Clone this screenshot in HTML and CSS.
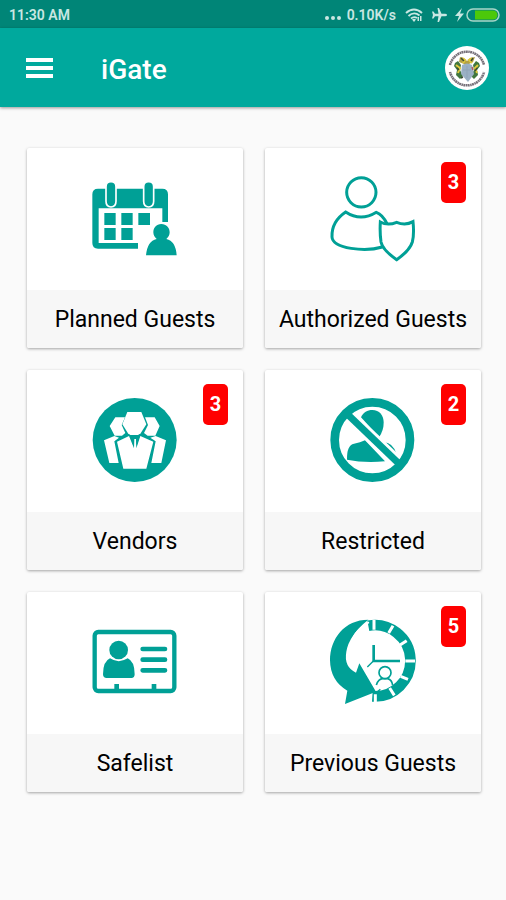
FILE: index.html
```html
<!DOCTYPE html>
<html lang="en">
<head>
    <meta charset="UTF-8">
    <meta name="viewport" content="width=device-width, initial-scale=1.0">
    <title>iGate</title>
    <link rel="stylesheet" href="styles.css">
</head>
<body>

    <!-- Status bar -->
    <div class="status-bar">
        <span>11:30 AM</span>
        <div class="status-icons">
            <svg class="dots" width="16" height="14" viewBox="0 0 16 14" aria-hidden="true">
                <circle cx="2" cy="10" r="2"/><circle cx="8" cy="10" r="2"/><circle cx="14" cy="10" r="2"/>
            </svg>
            <span class="speed">0.10K/s</span>
            <svg class="wifi" width="18" height="14" viewBox="0 0 18 14" aria-hidden="true">
                <path d="M1 5Q9-2 17 5M3.500 8Q9 3 14.500 7.500M6 10.500Q9 8 12 10" fill="none" stroke="currentColor" stroke-width="1.900"/>
                <path d="M7 11.500Q9 10 11 11.500L9 14zM12.500 9h1.500v4h-1.500zM15 8h1.500v5H15z"/>
            </svg>
            <svg class="plane" width="16" height="14" viewBox="0 0 16 14" aria-hidden="true">
                <path d="M16 7Q16 8.300 14 8.300H10.500L8 14H6.500L7.500 8.300H4L2.500 10.500H1L2 7 1 3.500H2.500L4 5.700H7.500L6.500 0H8L10.500 5.700H14Q16 5.700 16 7z"/>
            </svg>
            <svg class="bolt" width="9" height="14" viewBox="0 0 9 14" aria-hidden="true">
                <path d="M7 0 0 8H4L2 14 9 5.500H5z"/>
            </svg>
            <svg width="34" height="14" viewBox="0 0 34 14" aria-hidden="true">
                <rect x="1" y="1" width="32" height="12" rx="6" fill="none" stroke="#a9d6c9" stroke-width="1.500"/>
                <path d="M9 2.500H27a4.500 4.500 0 0 1 0 9H9z" fill="#4cc80a"/>
            </svg>
        </div>
    </div>

    <!-- App bar -->
    <header class="app-bar">
        <button class="menu-button" type="button" aria-label="Menu">
            <span></span><span></span><span></span>
        </button>
        <h1>iGate</h1>
        <button class="crest-button" type="button" aria-label="Community">
            <svg width="44" height="44" viewBox="0 0 44 44" aria-hidden="true">
                <circle cx="22" cy="22" r="22" fill="#fff"/>
                <path d="M5 19A17.500 17.500 0 0 1 39 19" fill="none" stroke="#77717a" stroke-width="2.500" stroke-dasharray="2 .5 1.500 .4"/>
                <path d="M5 26A17.500 17.500 0 0 0 39 26" fill="none" stroke="#77717a" stroke-width="2.500" stroke-dasharray="1.500 .4 2 .5"/>
                <path d="M10 17 13 15 16 19 15 24 18 30 15 33 11 29 12 24 9 20z" fill="#41773e"/>
                <path d="M34 17 31 15 28 19 29 24 26 30 29 33 33 29 32 24 35 20z" fill="#41773e"/>
                <path d="M15 11 19 12 22 15 25 12 30 11 28 16 24 18H19L14 16z" fill="#b2a044"/>
                <path d="M17 12 20 14 18 17M27 12 24 14 27 17M11 19 15 22 13 27M33 19 30 22 32 27" fill="none" stroke="#e0ca3d" stroke-width="2"/>
                <path d="M16 12 19 15M28 12 26 15M12 22 14 24M32 22 30 25M18 31 16 32" stroke="#3c4a34" stroke-width="1.500"/>
                <path d="M17 19Q22 16 27 19L29 28 23 36 16 28z" fill="#9ab0c4"/>
                <path d="M18 24h8M22 20v12" stroke="#8fa4b8" stroke-width="1"/>
                <path d="M27 21 28 24" stroke="#b05a58" stroke-width="1.500"/>
            </svg>
        </button>
    </header>

    <!-- Dashboard tiles -->
    <main class="tiles">
        <a class="tile" href="#planned">
            <div class="tile-picture">
                <svg class="tile-icon" viewBox="30 12 270 270" aria-hidden="true">
                    <path d="M54 56H247Q264 56 264 73V156H247V115H56V219H174V236H54Q37 236 37 219V73Q37 56 54 56z"/>
                    <path d="M93 35q-15 0-15 15V94q0 17 15 17t15-17V50q0-15-15-15zM206 35q-15 0-15 15V94q0 17 15 17t15-17V50q0-15-15-15z" stroke="#fff" stroke-width="5"/>
                    <path d="M73 129h34v36H73zM124 129h34v36H124zM175 129h35v36H175zM73 174h34v36H73zM124 174h34v36H124z"/>
                    <path d="M244 162C229 162 220 173 220 187C220 195 224 202 230 207Q202 213 198 256H290Q287 213 259 207C265 202 269 195 269 187C269 173 259 162 244 162z"/>
                </svg>
            </div>
            <div class="tile-label">Planned Guests</div>
        </a>

        <a class="tile" href="#authorized">
            <div class="tile-picture">
                <svg class="tile-icon line-icon" viewBox="24 27 270 270" aria-hidden="true">
                    <circle cx="124" cy="82" r="44"/>
                    <path d="M201 176Q188 149 169 142Q122 171 77 141Q34 170 36 216C38 252 137 261 187 246"/>
                    <path d="M181 171Q203 183 230 172Q256 183 279 170Q283 208 277 231Q269 257 230 284Q188 255 183 231Q179 202 181 171z"/>
                </svg>
                <span class="badge">3</span>
            </div>
            <div class="tile-label">Authorized Guests</div>
        </a>

        <a class="tile" href="#vendors">
            <div class="tile-picture">
                <svg class="tile-icon" viewBox="15 18 270 270" aria-hidden="true">
                    <circle cx="149" cy="150" r="126"/>
                    <g fill="#fff">
                        <path d="M91 82H120L110 105 121 129 111 137H89L74 108zM180 82H209L224 108 211 137H188L177 129 189 105z"/>
                        <path d="M57 151 88 138 102 143 88 154 101 219H73zM243 151 212 138 196 143 212 154 199 219H229z"/>
                        <path d="M127 66H169L184 103 167 130 159 135H136L129 130 112 103z"/>
                        <path d="M96 155 132 138 147 175 148 147H153L154 175 166 138 205 155 184 236H115z"/>
                    </g>
                    <path d="M137 138 147 148 145 168zM164 138 153 148 155 168z"/>
                </svg>
                <span class="badge">3</span>
            </div>
            <div class="tile-label">Vendors</div>
        </a>

        <a class="tile" href="#restricted">
            <div class="tile-picture">
                <svg class="tile-icon" viewBox="24 18 270 270" aria-hidden="true">
                    <path d="M123 82C130 66 142 60 157 60C178 60 191 76 191 98Q191 121 177 142z"/>
                    <path d="M135 151 195 214Q133 220 81 209Q80 165 102 161Q121 158 135 151zM190 157Q219 157 230 193z"/>
                    <!-- White edges either side of the slash -->
                    <path d="M88 78 237 221" stroke="#fff" stroke-width="38"/>
                    <path d="M84 74 237 221" stroke="#00a096" stroke-width="21"/>
                    <circle cx="157" cy="150" r="113" fill="none" stroke="#00a096" stroke-width="26"/>
                </svg>
                <span class="badge">2</span>
            </div>
            <div class="tile-label">Restricted</div>
        </a>

        <a class="tile" href="#safelist">
            <div class="tile-picture">
                <svg class="tile-icon" viewBox="15 -6 270 270" aria-hidden="true">
                    <rect x="29" y="36" width="239" height="177" rx="11" fill="none" stroke="#00a096" stroke-width="13"/>
                    <path d="M88 192h14v22H88zM200 192h14v22h-14z"/>
                    <circle cx="101" cy="90" r="28"/>
                    <path d="M75 115Q101 132 128 115Q149 124 149 163Q149 174 139 174H65Q54 174 54 163Q54 124 75 115z"/>
                    <path d="M173 87H240M173 119H240M173 151H240" stroke="#00a096" stroke-width="14" stroke-linecap="round"/>
                </svg>
            </div>
            <div class="tile-label">Safelist</div>
        </a>

        <a class="tile" href="#previous">
            <div class="tile-picture">
                <svg class="tile-icon" viewBox="24 24 270 270" aria-hidden="true">
                    <!-- Clock ring with the hour ticks cut out -->
                    <path d="M145 47A107 107 0 1 1 157 259" fill="none" stroke="#00a096" stroke-width="32"/>
                    <path d="M162 30V59M219 47 206 69M260 92 240 105M285 153H256M264 208 242 199M223 256 209 234M166 280V253" stroke="#fff" stroke-width="9"/>
                    <path d="M161 105V153H240" fill="none" stroke="#00a096" stroke-width="8"/>
                    <path d="M160 153 142 171" stroke="#00a096" stroke-width="4"/>
                    <!-- Guest inside the clock -->
                    <g fill="#fff" stroke="#00a096" stroke-width="5">
                        <path d="M169 225Q175 207 188 206H203Q216 210 218 226"/>
                        <circle cx="195" cy="188" r="18"/>
                    </g>
                    <path d="M181 238 167 250 181 246" fill="none" stroke="#00a096" stroke-width="4"/>
                    <!-- Back arrow -->
                    <path d="M145 29C73 29 30 86 30 151Q31 213 82 242L75 282 168 245 118 160 108 188Q71 170 79 125Q87 75 145 29z"/>
                    <path d="M147 37Q112 58 101 81" fill="none" stroke="#fff" stroke-width="5"/>
                </svg>
                <span class="badge">5</span>
            </div>
            <div class="tile-label">Previous Guests</div>
        </a>
    </main>

</body>
</html>
```
FILE: styles.css
```css
:root {
    --teal: #00a99d;
    --teal-dark: #008577;
    --teal-icon: #00a096;
    --page: #fafafa;
}

* {
    box-sizing: border-box;
}

body {
    margin: 0;
    min-height: 100vh;
    background-color: var(--page);
    font-family: Roboto, "Liberation Sans", sans-serif;
    color: #000;
}

button {
    border: none;
    padding: 0;
    background: none;
    cursor: pointer;
}

svg {
    display: block;
}

/* --- Status bar --- */
.status-bar {
    display: flex;
    align-items: center;
    justify-content: space-between;
    height: 28px;
    padding: 2px 6px 0 9px;
    background-color: var(--teal-dark);
    color: #c9e7e2;
    font-size: 14px;
    font-weight: 600;
}

.status-icons {
    display: flex;
    align-items: center;
    fill: currentColor;
}

.speed {
    margin: 0 9px 0 6px;
}

.wifi, .plane {
    margin-right: 8px;
}

.bolt {
    margin-right: 2px;
}

/* --- App bar --- */
.app-bar {
    display: flex;
    align-items: center;
    height: 79px;
    padding: 0 17px 0 26px;
    background-color: var(--teal);
    box-shadow: 0 1px 3px rgba(0, 0, 0, 0.4);
}

.app-bar h1 {
    margin: 0 auto 0 48px;
    padding-top: 3px;
    color: #fff;
    font-size: 28px;
    font-weight: 500;
}

.menu-button {
    display: grid;
    gap: 4px;
    width: 27px;
}

.menu-button span {
    height: 4px;
    background-color: #fff;
}

/* --- Tiles --- */
.tiles {
    display: grid;
    grid-template-columns: 1fr 1fr;
    gap: 22px;
    padding: 41px 25px 41px 27px;
}

.tile {
    background-color: #fff;
    border-radius: 2px;
    box-shadow: 0 1px 3px rgba(0, 0, 0, 0.35);
    color: inherit;
    text-decoration: none;
    overflow: hidden;
}

.tile-picture {
    position: relative;
    display: flex;
    justify-content: center;
    padding: 26px 0;
}

.tile-icon {
    width: 90px;
    height: 90px;
    fill: var(--teal-icon);
}

.line-icon {
    fill: none;
    stroke: var(--teal-icon);
    stroke-width: 9;
}

.tile-label {
    padding: 15px 0 13px;
    background-color: #f7f7f7;
    font-size: 23px;
    font-weight: 400;
    line-height: 30px;
    text-align: center;
    white-space: nowrap;
}

.badge {
    position: absolute;
    top: 14px;
    right: 15px;
    width: 25px;
    border-radius: 5px;
    background-color: #f00;
    color: #fff;
    font-size: 20px;
    font-weight: 700;
    line-height: 41px;
    text-align: center;
}
```
